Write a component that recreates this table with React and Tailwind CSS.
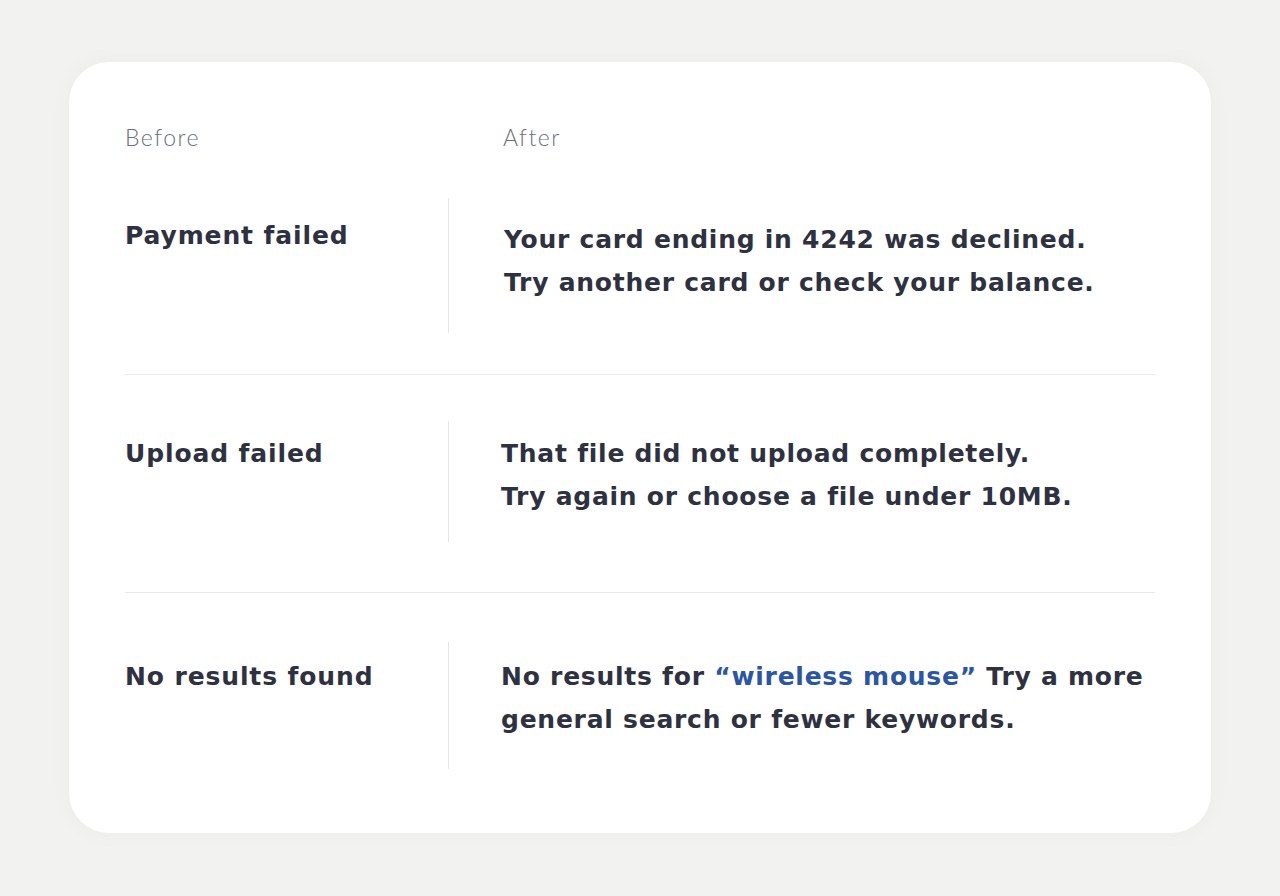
const rows = [
  {
    label: 'Payment failed',
    h: 'h-[135px]',
    pt: 'pt-[16px]',
    textPt: 'pt-[20px] pl-[55px]',
    text: (
      <>
        Your card ending in 4242 was declined.
        <br />
        Try another card or check your balance.
      </>
    ),
  },
  {
    label: 'Upload failed',
    h: 'h-[121px]',
    pt: 'pt-[11px]',
    textPt: 'pt-[11px] pl-[52px]',
    text: (
      <>
        That file did not upload completely.
        <br />
        Try again or choose a file under 10MB.
      </>
    ),
  },
  {
    label: 'No results found',
    h: 'h-[127px]',
    pt: 'pt-[13px]',
    textPt: 'pt-[13px] pl-[52px]',
    text: (
      <>
        No results for{' '}
        <span className="text-[#2b56a6]">&ldquo;wireless mouse&rdquo;</span> Try a more
        <br />
        general search or fewer keywords.
      </>
    ),
  },
];

const bodyFont = { fontFamily: '"DejaVu Sans", Lato, sans-serif' };

function Row({ row }) {
  return (
    <div className={`flex ${row.h}`}>
      <div className={`w-[323px] shrink-0 ${row.pt}`}>
        <div
          className="text-[25px] leading-[43px] font-bold tracking-[0.035em] text-[#2e3140]"
          style={bodyFont}
        >
          {row.label}
        </div>
      </div>
      <div className="w-px bg-[#e6e6e8]" />
      <div className={row.textPt}>
        <p
          className="text-[25px] leading-[43px] font-bold tracking-[0.03em] text-[#2e3140] whitespace-nowrap"
          style={bodyFont}
        >
          {row.text}
        </p>
      </div>
    </div>
  );
}

export default function App() {
  return (
    <div
      className="min-h-screen bg-[#f2f2f1] pt-[62px] px-[69px]"
      style={{ fontFamily: 'Lato, "Open Sans", sans-serif' }}
    >
      <div className="h-[771px] rounded-[40px] bg-white px-[56px] pt-[61px] shadow-[0_0_24px_rgba(0,0,0,0.03)]">
        <div className="flex text-[23px] leading-[28px] font-light tracking-[0.065em] text-[#6b6f7a]">
          <div className="w-[378px]">Before</div>
          <div>After</div>
        </div>

        <div className="mt-[47px]">
          <Row row={rows[0]} />
          <div className="mt-[41px] mb-[46px] h-px bg-[#e9e9eb]" />
          <Row row={rows[1]} />
          <div className="mt-[50px] mb-[49px] h-px bg-[#e9e9eb]" />
          <Row row={rows[2]} />
        </div>
      </div>
    </div>
  );
}
